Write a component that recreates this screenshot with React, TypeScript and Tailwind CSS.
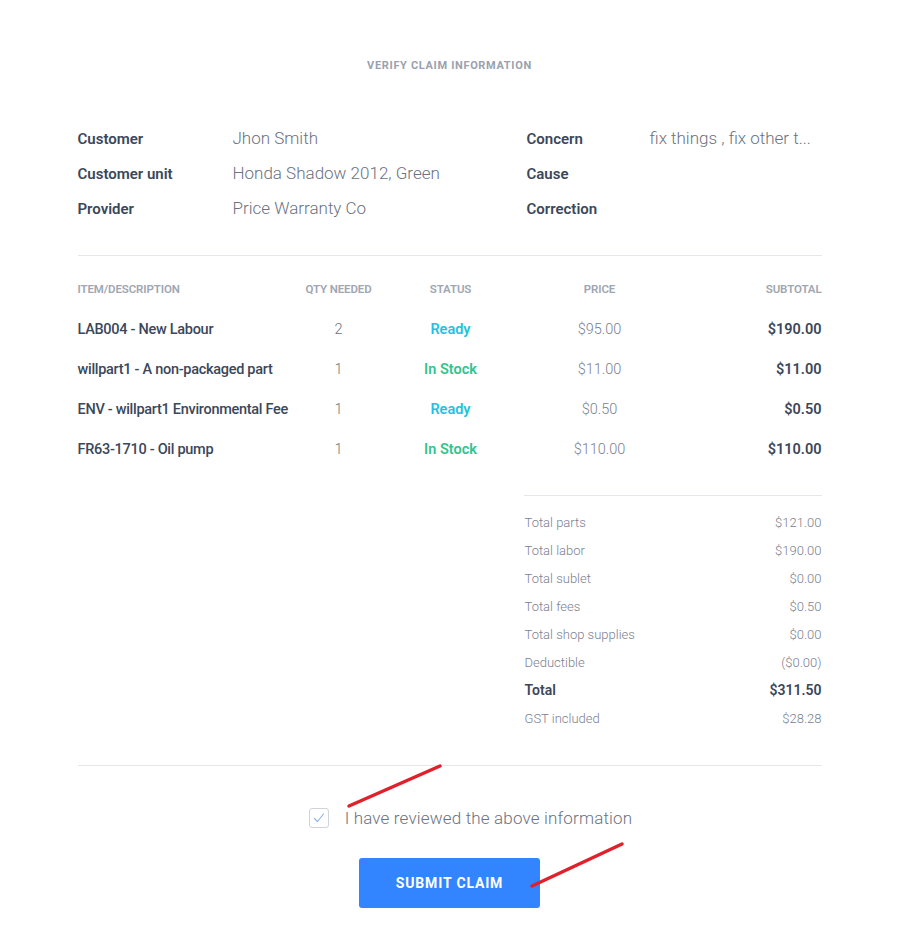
import React from "react";

const items = [
  { desc: "LAB004 - New Labour", qty: "2", status: "Ready", price: "$95.00", sub: "$190.00" },
  { desc: "willpart1 - A non-packaged part", qty: "1", status: "In Stock", price: "$11.00", sub: "$11.00" },
  { desc: "ENV - willpart1 Environmental Fee", qty: "1", status: "Ready", price: "$0.50", sub: "$0.50" },
  { desc: "FR63-1710 - Oil pump", qty: "1", status: "In Stock", price: "$110.00", sub: "$110.00" },
];

const totals = [
  ["Total parts", "$121.00"],
  ["Total labor", "$190.00"],
  ["Total sublet", "$0.00"],
  ["Total fees", "$0.50"],
  ["Total shop supplies", "$0.00"],
  ["Deductible", "($0.00)"],
  ["Total", "$311.50"],
  ["GST included", "$28.28"],
];

export default function App() {
  return (
    <div className="relative min-h-[951px] bg-white font-['Roboto',sans-serif]">
      <div className="mx-auto w-[744px] pt-[58px]">
        <h1 className="text-center text-[11px] font-bold tracking-[0.06em] text-[#9aa1ae]">VERIFY CLAIM INFORMATION</h1>

        <div className="mt-[54px] flex pb-[35px] border-b border-[#e5e7eb]">
          <div className="w-[449px] flex flex-col gap-[14px]">
            {[
              ["Customer", "Jhon Smith"],
              ["Customer unit", "Honda Shadow 2012, Green"],
              ["Provider", "Price Warranty Co"],
            ].map(([l, v]) => (
              <div key={l} className="flex items-center h-[21px]">
                <div className="w-[155px] text-[15px] font-semibold text-[#3b475a]">{l}</div>
                <div className="text-[17px] font-light text-[#6b7280]">{v}</div>
              </div>
            ))}
          </div>
          <div className="flex-1 flex flex-col gap-[14px]">
            {[
              ["Concern", "fix things , fix other t..."],
              ["Cause", ""],
              ["Correction", ""],
            ].map(([l, v]) => (
              <div key={l} className="flex items-center h-[21px]">
                <div className="w-[123px] text-[15px] font-semibold text-[#3b475a]">{l}</div>
                <div className="text-[17px] font-light text-[#6b7280]">{v}</div>
              </div>
            ))}
          </div>
        </div>

        <div className="mt-[26px] flex items-center h-[16px] text-[11.5px] font-semibold text-[#a0a6b2] tracking-[-0.01em]">
          <div className="w-[210px]">ITEM/DESCRIPTION</div>
          <div className="w-[102px] text-center">QTY NEEDED</div>
          <div className="w-[122px] text-center">STATUS</div>
          <div className="w-[176px] text-center">PRICE</div>
          <div className="flex-1 text-right">SUBTOTAL</div>
        </div>
        <div className="mt-[22px] flex flex-col gap-[19px]">
          {items.map((it) => (
            <div key={it.desc} className="flex items-center h-[21px] text-[14.5px]">
              <div className="w-[210px] font-medium text-[#3b475a] tracking-[-0.02em] whitespace-nowrap">{it.desc}</div>
              <div className="w-[102px] text-center font-light text-[#6b7280]">{it.qty}</div>
              <div className={`w-[122px] text-center font-semibold ${it.status === "Ready" ? "text-[#1ec3e0]" : "text-[#34c38f]"}`}>{it.status}</div>
              <div className="w-[176px] text-center font-light text-[#7b8190]">{it.price}</div>
              <div className="flex-1 text-right font-semibold text-[#3b475a]">{it.sub}</div>
            </div>
          ))}
        </div>

        <div className="mt-[34px] flex justify-end">
          <div className="w-[298px] border-t border-[#e5e7eb] pt-[18px] flex flex-col gap-[10px] pb-[37px]">
            {totals.map(([l, v]) => {
              const bold = l === "Total";
              return (
                <div key={l} className={`flex justify-between items-center h-[18px] ${bold ? "font-semibold text-[#3b475a] text-[14px]" : "font-light text-[#7b8190] text-[13px]"}`}>
                  <span className="pl-px">{l}</span>
                  <span>{v}</span>
                </div>
              );
            })}
          </div>
        </div>

        <div className="border-t border-[#e5e7eb] pt-[40px] flex flex-col items-center">
          <label className="flex items-center gap-[16px] pl-[42px]">
            <span className="w-[20px] h-[20px] rounded-[3px] border border-[#cfd3da] flex items-center justify-center">
              <svg width="12" height="12" viewBox="0 0 12 12" fill="none">
                <path d="M1.5 6.5 L4.5 9.5 L10.5 2" stroke="#8fb4f5" strokeWidth="1.2" strokeLinecap="round" strokeLinejoin="round" />
              </svg>
            </span>
            <span className="text-[17px] font-light text-[#6b7280] tracking-[0.01em]">I have reviewed the above information</span>
          </label>
          <button className="mt-[27px] w-[181px] h-[50px] rounded-[3px] bg-[#3385ff] text-white text-[14px] font-bold tracking-[0.06em]">SUBMIT CLAIM</button>
        </div>
      </div>

      <svg className="absolute left-0 top-0 pointer-events-none" width="899" height="951">
        <line x1="349" y1="806" x2="440" y2="766" stroke="#e0212b" strokeWidth="3.5" strokeLinecap="round" />
        <line x1="532" y1="886" x2="622" y2="844" stroke="#e0212b" strokeWidth="3.5" strokeLinecap="round" />
      </svg>
    </div>
  );
}
